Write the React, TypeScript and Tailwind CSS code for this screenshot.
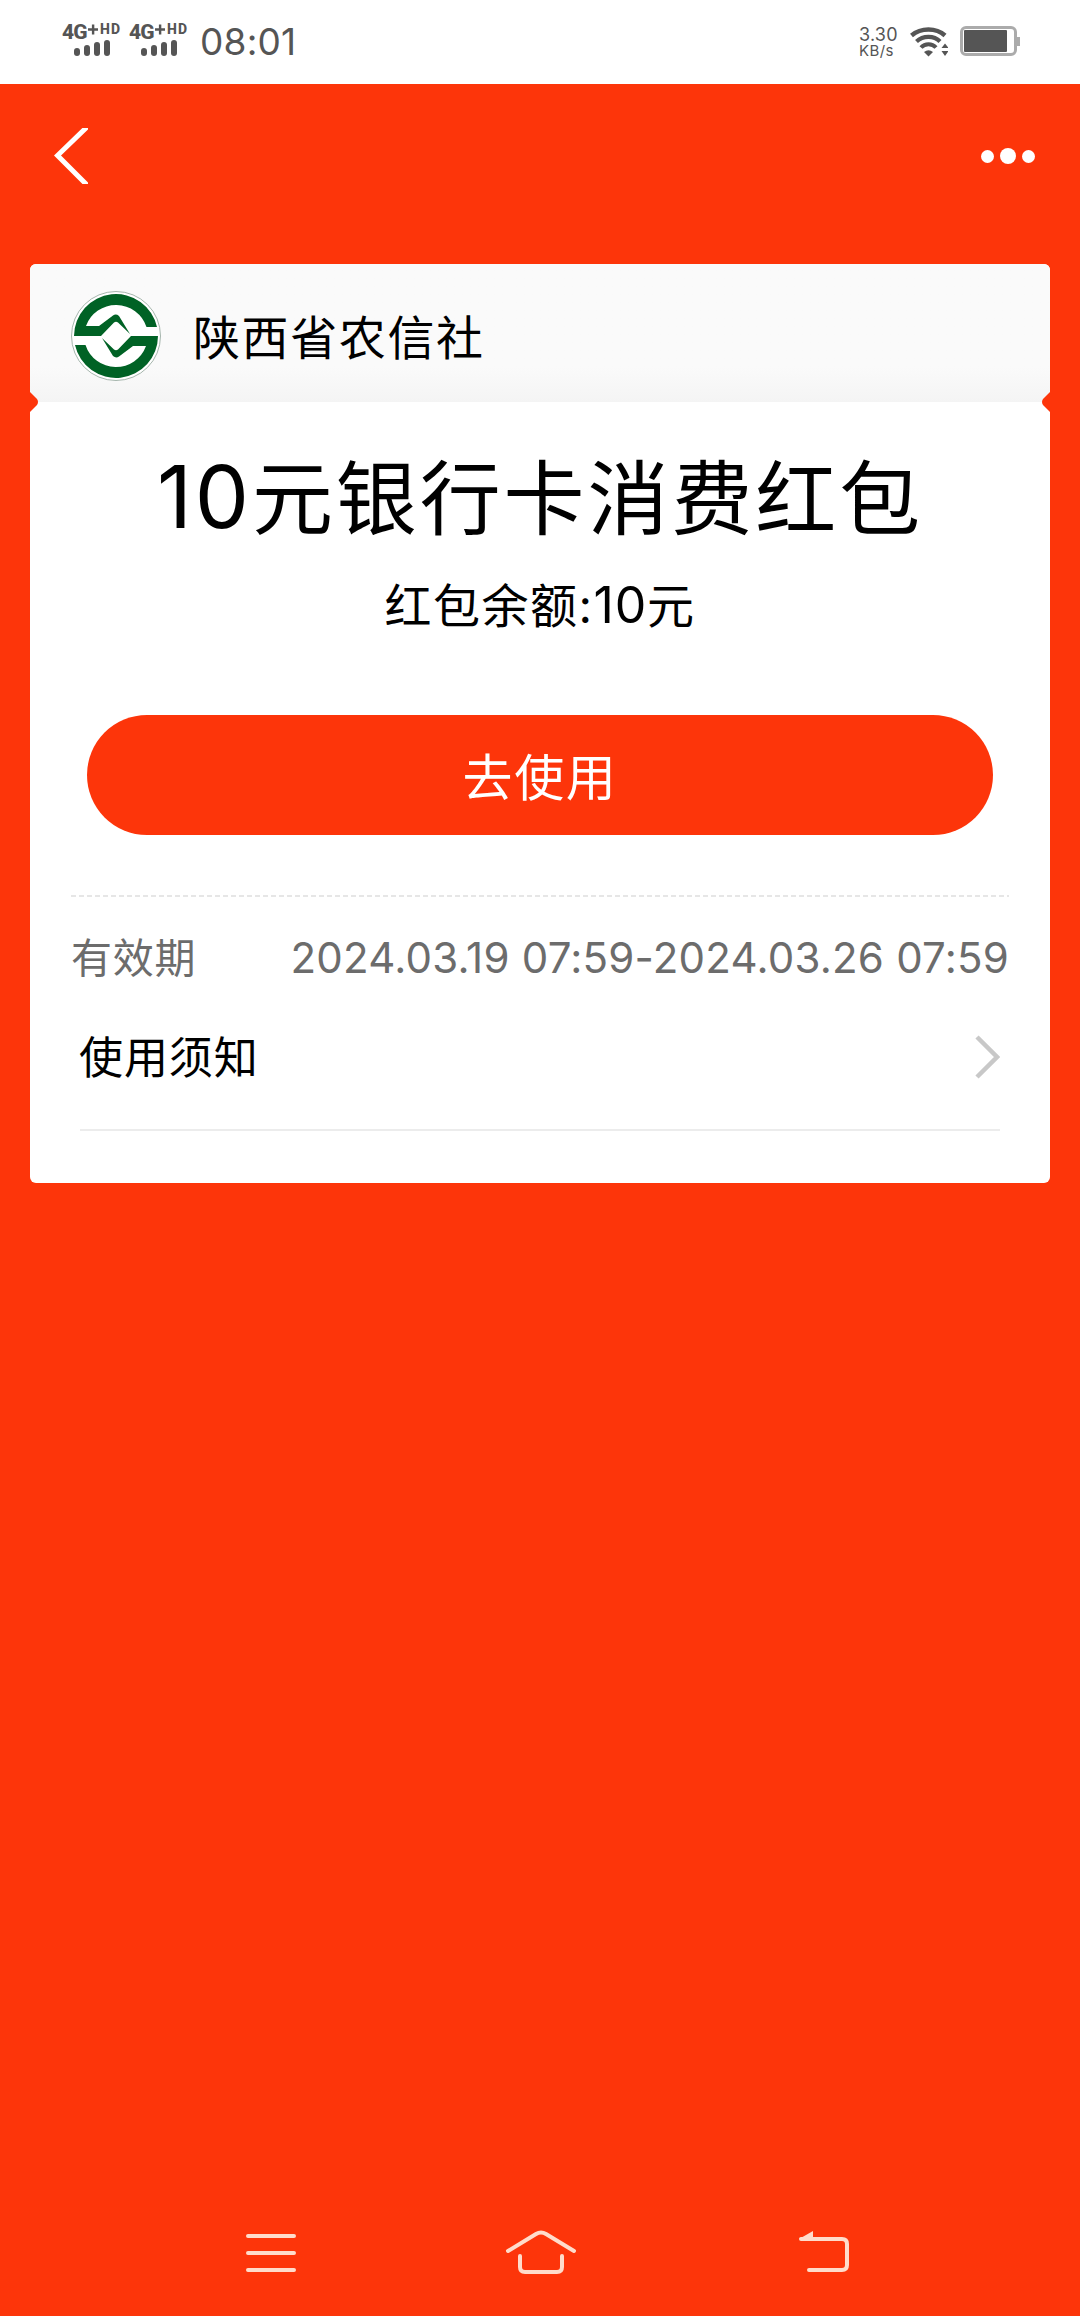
const signalBars = ["h-2", "h-[11px]", "h-[14px]", "h-4"];

function Signal() {
  return (
    <div className="flex w-[59px] flex-col items-center">
      <div className="flex h-4 w-full items-start font-['Roboto'] font-extrabold">
        <span className="text-[21px] leading-4 tracking-[-0.8px]">4G</span>
        <svg className="ml-px" width="11" height="11" viewBox="0 0 11 11">
          <path d="M5.500 0V11M0 5.500H11" stroke="#555" strokeWidth="2.600" />
        </svg>
        <span className="ml-[2px] text-[14px] leading-[11px] tracking-[1px]">HD</span>
      </div>
      <div className="flex h-4 items-end gap-1">
        {signalBars.map((h) => (
          <div key={h} className={`w-[6px] rounded-[3px] bg-[#555] ${h}`} />
        ))}
      </div>
    </div>
  );
}

function StatusBar() {
  return (
    <div className="flex h-[84px] items-start justify-between bg-white pl-[62px] pr-[60px] text-[#555]">
      <div className="flex pt-6">
        <Signal />
        <div className="ml-2">
          <Signal />
        </div>
        <div className="ml-3 text-[37px] leading-9 tracking-[0.2px]">08:01</div>
      </div>
      <div className="flex items-start pt-[26px]">
        <div className="mr-[13px] w-[38px]">
          <div className="text-[18px] leading-[17px] tracking-[0.2px]">3.30</div>
          <div className="text-[15px] leading-[15px] tracking-[0.4px]">KB/s</div>
        </div>
        <svg className="mr-3" width="38" height="32" viewBox="0 0 38 32" fill="none">
          <path d="M1.5 9.5C11 1.5 26 1.5 35 9.5" stroke="#555" strokeWidth="4.5" />
          <path d="M6.5 15.5C13 9.3 24 9.3 30 15.5" stroke="#555" strokeWidth="4.2" />
          <path d="M11 21.5C15 17 22 17 26 21.5" stroke="#555" strokeWidth="4" />
          <path d="M14 26q4.500-3.500 9 0l-4.500 4.500z" fill="#555" />
          <path d="M31.500 22h7l-3.500-4.500zM31.500 25h7l-3.500 5z" fill="#555" />
        </svg>
        <div className="flex items-center">
          <div className="h-[30px] w-[57px] rounded-[6px] border-[3px] border-[#ababab] p-[1px]">
            <div className="h-full w-[43px] rounded-[1px] bg-[#555]" />
          </div>
          <div className="h-[9px] w-[3px] bg-[#ababab]" />
        </div>
      </div>
    </div>
  );
}

function TitleBar() {
  return (
    <div className="flex h-[144px] items-center justify-between pl-[54px] pr-[45px]">
      <svg width="34" height="56" viewBox="0 0 34 56" fill="none">
        <path d="M33 -1L3.500 27.500L33 57" stroke="#fff" strokeWidth="5" />
      </svg>
      <div className="flex items-center gap-[6px]">
        <div className="size-[13px] rounded-full bg-white" />
        <div className="size-4 rounded-full bg-white" />
        <div className="size-[13px] rounded-full bg-white" />
      </div>
    </div>
  );
}

function BankLogo() {
  const half =
    "M-42 0A42 42 0 0 1 41 -9H30.500A32 32 0 0 0 -30 -10H-17L-3 -20.500Q0 -22.500 3 -20L14 -2L2 -13.500Q0 -15 -2 -13.500L-15 0Z";
  return (
    <svg width="92" height="92" viewBox="-46 -46 92 92">
      <circle r="44.500" fill="#fff" stroke="#8fa398" strokeWidth="0.8" />
      <path d={half} fill="#006225" />
      <path d={half} fill="#006225" transform="rotate(180)" />
    </svg>
  );
}

function Coupon() {
  return (
    <div className="relative mx-[30px] mt-9 rounded-[6px] bg-white">
      <div className="flex h-[138px] items-center rounded-t-[6px] bg-linear-to-b from-[#fafafa] from-75% to-[#f4f4f4] pl-10 pt-[6px]">
        <BankLogo />
        <div className="ml-[31px] pt-1 text-[47px] leading-[48px] tracking-[1.6px]">陕西省农信社</div>
      </div>
      <svg className="absolute left-0 top-32" width="8" height="20" viewBox="0 0 8 20">
        <path d="M0 0L7 7Q9 10 7 13L0 20Z" fill="#fd350a" />
      </svg>
      <svg className="absolute right-0 top-32" width="8" height="20" viewBox="0 0 8 20">
        <path d="M8 0L1 7Q-1 10 1 13L8 20Z" fill="#fd350a" />
      </svg>

      <div className="px-[41px] pb-[52px] pt-[53px]">
        <h1 className="h-[85px] whitespace-nowrap text-center text-[81px] leading-[84px] tracking-[2.9px]">
          <span className="text-[86px]">10</span>元银行卡消费红包
        </h1>
        <p className="mt-[41px] h-[49px] text-center text-[47px] leading-[48px] tracking-[1.5px]">
          红包余额:<span className="text-[50px] tracking-[0.8px]">10</span>元
        </p>
        <div className="px-4">
          <button className="mt-[85px] block h-[120px] w-full rounded-full bg-[#fd350a] pt-[5px] text-[50px] leading-[50px] tracking-[1.6px] text-white">
            去使用
          </button>
        </div>
        <div className="mt-[60px] h-[2px] bg-[repeating-linear-gradient(90deg,#e6e6e6_0_5px,transparent_5px_8px)]" />
        <div className="mt-10 flex justify-between text-[42px] leading-[42px] text-[#6c6c6c]">
          <span className="text-[41px] tracking-[0.8px]">有效期</span>
          <span className="whitespace-nowrap tracking-[0.23px]">2024.03.19 07:59-2024.03.26 07:59</span>
        </div>
        <div className="mx-[9px] mt-[55px] flex items-center justify-between border-b-2 border-[#ececec] pb-[49px]">
          <span className="-ml-px pt-[2px] text-[44px] leading-[44px] tracking-[0.9px]">使用须知</span>
          <svg width="26" height="44" viewBox="0 0 26 44" fill="none">
            <path d="M3 2L23 22L3 42" stroke="#c8c8c8" strokeWidth="4.500" />
          </svg>
        </div>
      </div>
    </div>
  );
}

function NavigationBar() {
  return (
    <div className="mt-auto flex h-[90px] items-start pl-[245px]">
      <svg width="52" height="48" viewBox="0 0 52 48" stroke="#ffdccb" strokeWidth="4" strokeLinecap="round">
        <path d="M3 10H49M3 27H49M3 44H49" />
      </svg>
      <svg className="ml-52" width="72" height="50" viewBox="0 0 72 50" fill="none" stroke="#ffdccb" strokeWidth="4" strokeLinecap="round">
        <path d="M3 25L31 8Q36 5 41 8L69 25" />
        <path d="M15 30V41Q15 46 20 46H52Q57 46 57 41V30" />
      </svg>
      <svg className="ml-[220px]" width="54" height="48" viewBox="0 0 54 48" fill="none" stroke="#ffdccb" strokeWidth="4" strokeLinecap="round">
        <path d="M4 13H45Q50 13 50 18V39Q50 44 45 44H12" />
        <path d="M2 13L16 5V13Z" fill="#ffdccb" stroke="none" />
      </svg>
    </div>
  );
}

export default function App() {
  return (
    <div className="flex h-[2316px] w-[1080px] flex-col bg-[#fd350a] font-['Inter','Noto_Sans_CJK_SC',sans-serif] text-black">
      <StatusBar />
      <TitleBar />
      <Coupon />
      <NavigationBar />
    </div>
  );
}
